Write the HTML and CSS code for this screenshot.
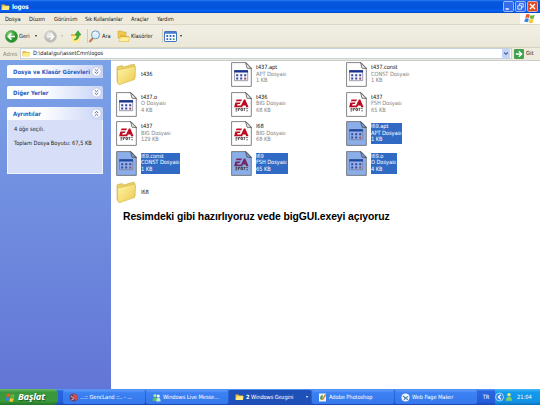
FILE: index.html
```html
<!DOCTYPE html>
<html lang="tr">
<head>
<meta charset="utf-8">
<title>logos</title>
<link rel="stylesheet" href="styles.css">
</head>
<body>
<svg class="defs" width="0" height="0">
  <defs>
    <linearGradient id="gold" x1="0" y1="0" x2="1" y2="1"><stop offset="0" stop-color="#fff6a8"/><stop offset="1" stop-color="#ecc94e"/></linearGradient>
    <radialGradient id="green" cx=".35" cy=".3"><stop offset="0" stop-color="#8fdc7c"/><stop offset="1" stop-color="#27942c"/></radialGradient>
    <radialGradient id="gray" cx=".35" cy=".3"><stop offset="0" stop-color="#eeeeea"/><stop offset="1" stop-color="#bdbdb8"/></radialGradient>
    <symbol id="folder" viewBox="0 0 21 23">
      <path d="M1 4.5Q1 3.5 2 3.5L6 2.6L8 4L17 1.2Q19 1 19 3V15L3 21L1 19Z" fill="#edcf63" stroke="#c8a941" stroke-width=".6"/>
      <path d="M1.5 7L17.5 3.6Q19.5 3.3 19.5 5L18.5 16.5L4 21.5Q1.8 22 1.7 19.5Z" fill="url(#gold)" stroke="#d2b54e" stroke-width=".6"/>
    </symbol>
    <symbol id="mini-folder" viewBox="0 0 9 7">
      <path d="M.5 1H3.5L4.3 2H8V6.3H.5Z" fill="#e4b63c"/><path d="M1.6 2.8H8.7L7.8 6.5H.6Z" fill="#ffea86"/>
    </symbol>
    <symbol id="page" viewBox="0 0 21 25">
      <path class="paper" d="M.6.6H15L20.3 6V24.4H.6Z" stroke="#666" stroke-width=".8"/>
      <path class="fold" d="M14.6.6L16 6.2L20.3 6.6Z" stroke="#444" stroke-width=".7"/>
    </symbol>
    <symbol id="grid" viewBox="0 0 21 25">
      <use href="#page"/>
      <path class="sheet" d="M3.5 8.5H16.7V18.7H3.5Z" stroke="#77798c" stroke-width=".7"/>
      <path class="bar" d="M3.2 8.2H17V10.5H3.2Z"/>
      <path d="M5.2 12.2h2v2h-2zM9.2 12.2h2v2h-2zM13.2 12.2h2v2h-2zM5.2 15.6h2v2h-2zM9.2 15.6h2v2h-2z" fill="#374895"/><path d="M13.2 15.6h2v2h-2z" fill="#914c63"/>
    </symbol>
    <symbol id="ea" viewBox="0 0 21 25">
      <use href="#page"/>
      <path class="ea-mark" d="M5.6 7.6H11L10.2 9.3H4.8ZM4.4 10.4H9.6L8.8 12H6.6L6.1 13.4H10L12.9 7.6H14.3L17.6 15.2H15.1L14.5 13.5H12L11.1 15.2H3.1Z"/>
      <path d="M4.5 16.4H6.5M4.5 17.7H6.5M4.5 19H6.2M7.5 16.4V19M7.5 16.5H9V17.7M10 16.4H11.5V18.6H10ZM12.5 16.4H14.5M13.3 16.5V19M15.2 16.6H16.8M15.3 18.8H16.9" fill="none" stroke="#342a2a" stroke-width=".75"/>
    </symbol>
    <symbol id="flag" viewBox="0 0 12 11">
      <path d="M2.2 1.6Q4 .3 5.8 1.6L5 5Q3.3 4 1.3 5Z" fill="#ed5a2b"/><path d="M6.5 1.9Q8.5 3 10.7 1.8L9.8 5.4Q7.8 6.4 5.7 5.3Z" fill="#6bb543"/>
      <path d="M1.1 5.7Q3 4.7 4.8 5.8L4 9.3Q2.2 8.2.2 9.1Z" fill="#3a82e0"/><path d="M5.5 6Q7.5 7.1 9.6 6.1L8.7 9.8Q6.7 10.7 4.7 9.5Z" fill="#f8c62e"/>
    </symbol>
    <symbol id="chev" viewBox="0 0 11 11">
      <circle cx="5.5" cy="5.5" r="4.6" fill="#fff" stroke="#b4bfdd" stroke-width=".7"/>
      <path d="M3.7 3.1L5.5 4.8L7.3 3.1M3.7 5.9L5.5 7.6L7.3 5.9" fill="none" stroke="#3b56a0" stroke-width=".9"/>
    </symbol>
  </defs>
</svg>

<div class="window">
  <header class="title">
    <svg class="title-icon" width="9" height="8"><use href="#mini-folder"/></svg>
    <span class="title-text">logos</span>
    <div class="controls">
      <svg width="11" height="11"><rect x=".5" y=".5" width="10" height="10" rx="1.3" fill="#356cec" stroke="#bdcff7" stroke-width=".8"/><path d="M2.5 8H5.8" stroke="#fff" stroke-width="1.4"/></svg>
      <svg width="11" height="11"><rect x=".5" y=".5" width="10" height="10" rx="1.3" fill="#356cec" stroke="#bdcff7" stroke-width=".8"/><path d="M4.5 4V2.7H8.2V6.2H7M2.8 4.7H6.5V8.2H2.8Z" fill="none" stroke="#fff" stroke-width=".8"/></svg>
      <svg width="11" height="11"><rect x=".5" y=".5" width="10" height="10" rx="1.3" fill="#df4c25" stroke="#f3c3b8" stroke-width=".8"/><path d="M3 3L8 8M8 3L3 8" stroke="#fff" stroke-width="1.3"/></svg>
    </div>
  </header>

  <div class="menubar">
    <nav class="menu"><span>Dosya</span><span>Düzen</span><span>Görünüm</span><span class="tight">Sık Kullanılanlar</span><span>Araçlar</span><span>Yardım</span></nav>
    <div class="brand"><svg width="12" height="11"><use href="#flag"/></svg></div>
  </div>

  <div class="toolbar">
    <div class="tool back">
      <svg width="13" height="13"><circle cx="6.5" cy="6.5" r="6" fill="url(#green)" stroke="#3c9139" stroke-width=".6"/><path d="M10 6.5H3.6M6.4 3.4L3.3 6.5L6.4 9.6" fill="none" stroke="#fff" stroke-width="1.6"/></svg>
      <span>Geri</span><i class="caret"></i>
    </div>
    <div class="tool forward">
      <svg width="13" height="13"><circle cx="6.5" cy="6.5" r="5.8" fill="url(#gray)" stroke="#b2b2ad" stroke-width=".6"/><path d="M3 6.5H9.4M6.6 3.4L9.7 6.5L6.6 9.6" fill="none" stroke="#fff" stroke-width="1.5"/></svg>
      <i class="caret dim"></i>
    </div>
    <svg class="up" width="12" height="13"><path d="M1 4H4L5 5H10V12H1Z" fill="#e5bd4d"/><path d="M1 6H11L9.5 12.5H1Z" fill="#ffeb91"/><path d="M4 10Q7.3 8.7 7 5H4.9L8 .7L11 5H9Q9.3 10 4 10Z" fill="#3cad37" stroke="#24842a" stroke-width=".5"/></svg>
    <div class="tool search">
      <svg width="13" height="13"><path d="M5 8L1.5 12" stroke="#c27e52" stroke-width="2"/><circle cx="7.5" cy="4.8" r="4" fill="#d9efff" stroke="#7898bd"/><path d="M5.4 4Q6 2.5 8 2.5" stroke="#fff" fill="none"/></svg>
      <span>Ara</span>
    </div>
    <div class="tool folders">
      <svg width="13" height="12"><path d="M1 1H5L6 2H9V8H1Z" fill="#f0c94f" stroke="#c89c33" stroke-width=".5"/><path d="M3 5H7L8 6H12V11.5H3Z" fill="#e3b13c"/><path d="M3.5 7H12.8L11.5 11.5H2Z" fill="#fff09b" stroke="#d9b64b" stroke-width=".5"/></svg>
      <span>Klasörler</span>
    </div>
    <div class="tool views">
      <svg width="13" height="11"><rect x=".5" y=".5" width="12" height="10" rx=".6" fill="#fff" stroke="#4674bc"/><path d="M1 1H12V2.8H1Z" fill="#497ed0"/><path d="M2.4 4.1h1.8v1.8H2.4zM5.6 4.1h1.8v1.8H5.6zM8.8 4.1h1.8v1.8H8.8zM2.4 7.3h1.8v1.8H2.4zM5.6 7.3h1.8v1.8H5.6z" fill="#376bb3"/><path d="M8.8 7.3h1.8v1.8H8.8z" fill="#43a047"/></svg>
      <i class="caret"></i>
    </div>
  </div>

  <div class="address">
    <span class="address-label">Adres</span>
    <div class="field">
      <svg width="9" height="7"><use href="#mini-folder"/></svg>
      <span>D:\data\gui\assetCmn\logos</span>
      <svg class="drop" width="8" height="9"><rect width="8" height="9" rx="1" fill="#c3d3fb"/><path d="M2.2 3.5L4 5.3L5.8 3.5" fill="none" stroke="#4d6185" stroke-width="1.1"/></svg>
    </div>
    <div class="go">
      <svg width="10" height="10"><rect x=".3" y=".3" width="9.4" height="9.4" rx="1" fill="#38a447" stroke="#278536" stroke-width=".6"/><path d="M1.8 5H7.5M4.8 2.2L7.7 5L4.8 7.8" fill="none" stroke="#fff" stroke-width="1.4"/></svg>
      <span>Git</span>
    </div>
  </div>

  <main class="content">
    <aside class="side">
      <section class="panel"><h2>Dosya ve Klasör Görevleri<svg width="11" height="11"><use href="#chev"/></svg></h2></section>
      <section class="panel"><h2>Diğer Yerler<svg width="11" height="11"><use href="#chev"/></svg></h2></section>
      <section class="panel"><h2>Ayrıntılar<svg class="flip" width="11" height="11"><use href="#chev"/></svg></h2>
        <div class="details"><p>4 öğe seçili.</p><p class="size">Toplam Dosya Boyutu: 67,5 KB</p></div>
      </section>
    </aside>
    <div class="view">
      <div class="files">
        <div class="file folder"><svg><use href="#folder"/></svg><p><b>t436</b></p></div>
        <div class="file"><svg><use href="#grid"/></svg><p><b>t437.apt</b><br>APT Dosyası<br>1 KB</p></div>
        <div class="file"><svg><use href="#grid"/></svg><p><b>t437.const</b><br>CONST Dosyası<br>1 KB</p></div>
        <div class="file"><svg><use href="#grid"/></svg><p><b>t437.o</b><br>O Dosyası<br>4 KB</p></div>
        <div class="file"><svg><use href="#ea"/></svg><p><b>t436</b><br>BIG Dosyası<br>68 KB</p></div>
        <div class="file"><svg><use href="#ea"/></svg><p><b>t437</b><br>FSH Dosyası<br>65 KB</p></div>
        <div class="file"><svg><use href="#ea"/></svg><p><b>t437</b><br>BIG Dosyası<br>129 KB</p></div>
        <div class="file"><svg><use href="#ea"/></svg><p><b>l68</b><br>BIG Dosyası<br>68 KB</p></div>
        <div class="file selected"><svg><use href="#grid"/></svg><p><b>l69.apt</b><br>APT Dosyası<br>1 KB</p></div>
        <div class="file selected"><svg><use href="#grid"/></svg><p><b>l69.const</b><br>CONST Dosyası<br>1 KB</p></div>
        <div class="file selected"><svg><use href="#ea"/></svg><p><b>l69</b><br>FSH Dosyası<br>65 KB</p></div>
        <div class="file selected"><svg><use href="#grid"/></svg><p><b>l69.o</b><br>O Dosyası<br>4 KB</p></div>
        <div class="file folder"><svg><use href="#folder"/></svg><p><b>l68</b></p></div>
      </div>
      <p class="caption">Resimdeki gibi hazırlıyoruz vede bigGUI.exeyi açıyoruz</p>
    </div>
  </main>
</div>

<footer class="taskbar">
  <div class="start"><svg width="11" height="11"><use href="#flag"/></svg><span>Başlat</span></div>
  <div class="tasks">
    <div class="task"><svg width="9" height="9"><circle cx="4.5" cy="4.5" r="4" fill="#6c456f"/><path d="M4.5.5A4 4 0 0 1 7 7.5L4.5 4.5Z" fill="#d84d48"/><path d="M2 3L5 5.5L2.5 7" stroke="#d9bbc8" fill="none"/></svg><span>...:: GencLand ::.. - ...</span></div>
    <div class="task"><svg width="9" height="9"><circle cx="3" cy="2.6" r="1.6" fill="#a7e5a0"/><path d="M.5 8Q.5 4.3 3 4.3Q5.5 4.3 5.5 8Z" fill="#55bd5b"/><circle cx="6.3" cy="3" r="1.5" fill="#fff"/><path d="M4.2 8.4Q4.2 4.8 6.4 4.8Q8.6 4.8 8.6 8.4Z" fill="#bfeed0"/></svg><span>Windows Live Messe...</span></div>
    <div class="task active"><svg width="9" height="8"><use href="#mini-folder"/></svg><span><strong>2</strong> Windows Gezgini</span><i class="caret light"></i></div>
    <div class="task"><svg width="9" height="9"><rect x="1" y=".5" width="7" height="8" fill="#f5f5e5"/><path d="M2 6Q2 2 5 2L4 7Z" fill="#4b9b60"/><path d="M7.8 1.5L4.2 6.8" stroke="#cc8428" stroke-width="1.4"/></svg><span>Adobe Photoshop</span></div>
    <div class="task"><svg width="9" height="9"><circle cx="4.5" cy="4.5" r="4" fill="#eef6ff"/><path d="M2 3L4.5 5L7 3.4M3 7L4.5 5L7 6.8" fill="none" stroke="#4a80a5" stroke-width="1.1"/></svg><span>Web Page Maker</span></div>
  </div>
  <div class="lang">TR</div>
  <div class="tray">
    <svg width="9" height="10"><circle cx="4.5" cy="5" r="4" fill="#3289ec" stroke="#c6e4ff" stroke-width=".8"/><path d="M5.8 2.7L3.4 5L5.8 7.3" fill="none" stroke="#fff" stroke-width="1.3"/></svg>
    <svg width="8" height="10"><circle cx="4" cy="2.8" r="1.8" fill="#d9ec79"/><path d="M1 8.7Q1 4.8 4 4.8Q7 4.8 7 8.7Z" fill="#7fd062"/></svg>
    <span>21:04</span>
  </div>
</footer>
</body>
</html>
```

FILE: styles.css
```css
* { box-sizing: border-box; }
body {
  margin: 0; width: 540px; height: 405px; overflow: hidden;
  display: flex; flex-direction: column;
  font: 5.7px/6.7px "DejaVu Sans Condensed", "DejaVu Sans", sans-serif;
  font-stretch: condensed; color: #222; white-space: nowrap; background: #fff;
}
p, h2 { margin: 0; }
svg { display: block; flex: none; }
.defs { position: absolute; }
.window { flex: 1; min-height: 0; display: flex; flex-direction: column; }

.title {
  height: 13px; flex: none; display: flex; align-items: center; padding: 0 2px 0 1px; color: #fff;
  background: linear-gradient(#2e7bf1 0, #0757df 14%, #0453dc 60%, #0763f7 85%, #0343bd);
}
.title-text { margin: 1px 0 0 2px; font: bold 6.4px/9px "DejaVu Sans Condensed", sans-serif; letter-spacing: -.2px; }
.controls { margin-left: auto; display: flex; gap: 1px; }

.menubar { height: 12px; flex: none; display: flex; justify-content: space-between; background: #eeebdc; border-bottom: 1px solid #dcd8c7; }
.menu { display: grid; grid-template-columns: 24px 25px 31px 46px 26px 30px; align-items: center; padding: 2px 0 0 5px; letter-spacing: -.08px; }
.tight { letter-spacing: -.2px; }
.brand { width: 20px; background: #fff; display: flex; align-items: center; justify-content: center; }

.toolbar { height: 23px; flex: none; display: flex; align-items: center; background: linear-gradient(#f1efe5, #ebe8d8); border-bottom: 1px solid #d7d3c1; }
.tool { display: flex; align-items: center; flex: none; }
.back { width: 39px; margin-left: 5px; }
.back span { margin-left: 1px; width: 16px; }
.forward { width: 26px; gap: 4px; }
.up { margin-right: 5px; }
.search { width: 30px; height: 14px; gap: 1px; border-left: 1px solid #cfccbd; }
.folders { width: 44px; height: 14px; gap: 1px; letter-spacing: -.1px; }
.views { height: 14px; margin-left: 1px; border-left: 1px solid #cfccbd; }
.views svg { margin: 0 3px 0 1px; }
.caret { width: 0; height: 0; border: 1.5px solid transparent; border-top: 2px solid #222; border-bottom: 0; }
.dim { border-top-color: #b6b3a8; }
.light { border-top-color: #fff; }

.address { height: 12px; flex: none; display: flex; align-items: stretch; background: #eeebdd; padding-bottom: 1px; }
.address-label { width: 20px; padding: 3px 0 0 3px; color: #8b8981; }
.field { flex: 1; display: flex; align-items: center; background: #fff; border: 1px solid #c5d1db; padding: 0 1px; gap: 2px; letter-spacing: -.03px; }
.drop { margin-left: auto; }
.go { width: 28px; display: flex; align-items: center; padding-left: 2px; gap: 2px; }

.content { flex: 1; min-height: 0; display: flex; }
.side { width: 111px; flex: none; padding: 5px 8px 0 7px; display: flex; flex-direction: column; gap: 8px; background: linear-gradient(#7ba2e7, #6375d6); }
.panel h2 {
  height: 13px; display: flex; align-items: center; justify-content: space-between; padding: 0 1px 0 6px;
  font: bold 5.9px/8px "DejaVu Sans Condensed", sans-serif; letter-spacing: -.01px; color: #2c5bc0;
  background: linear-gradient(90deg, #fff 35%, #c8d4f7); border-radius: 2px 2px 0 0;
}
.flip { transform: rotate(180deg); }
.details { height: 54px; padding: 6px 6px 0; background: #d6dff7; border: 1px solid #edf2fd; border-top: 0; color: #222; }
.size { margin-top: 7px; letter-spacing: -.03px; }

.view { flex: 1; border-top: 1px solid #ccc; }
.files { display: grid; grid-template-columns: repeat(3, 115px); grid-auto-rows: 29.5px; padding: 1px 0 0 5px; }
.file {
  --paper: #fff; --fold: #eee; --sheet: #f5f5ff; --bar: #1b338f; --mark: #bd0c22;
  display: flex; gap: 4px; color: #858585; letter-spacing: -.08px;
}
.selected { --paper: #8baee8; --fold: #7c9ed8; --sheet: #93b0ec; --bar: #214a9f; --mark: #752862; }
.file svg { width: 21px; height: 25px; }
.file p { height: 21px; margin-top: 2px; line-height: 6.7px; }
.file b { font-weight: normal; color: #111; }
.file.folder { align-items: center; height: 25px; }
.file.folder svg { height: 23px; }
.file.folder p { height: 7px; margin: 0; }
.paper { fill: var(--paper); }
.fold { fill: var(--fold); }
.sheet { fill: var(--sheet); }
.bar { fill: var(--bar); }
.ea-mark { fill: var(--mark); }
.selected p, .selected b { color: #fff; }
.selected p { background: #316ac5; padding-right: 1px; }
.caption { margin: 0 0 0 12px; font: bold 10.4px/14px "Liberation Sans", Arial, sans-serif; letter-spacing: -.09px; color: #000; }

.taskbar { height: 16px; flex: none; display: flex; color: #fff; background: linear-gradient(#5a9cf7, #2a65df 15%, #245ddb 80%, #1b47ad); }
.start {
  width: 58px; display: flex; align-items: center; gap: 2px; padding-left: 5px; border-radius: 0 5px 5px 0;
  background: linear-gradient(#6db96b, #3b963c 20%, #389b39 75%, #267329);
  font: italic bold 9.4px/12px "Open Sans", "Noto Sans", sans-serif; letter-spacing: -.2px; text-shadow: 1px 1px 1px #285928;
}
.tasks { display: grid; grid-template-columns: repeat(5, 82px); gap: 1px; margin-left: 5px; padding: 1px 0; }
.task { display: flex; align-items: center; gap: 2px; padding-left: 6px; border-radius: 2px; background: linear-gradient(#609bfa, #3c81f3 20%, #3478eb); letter-spacing: -.08px; }
.active { background: #1e50b8; }
.task .caret { margin: 0 3px 0 auto; }
.lang { width: 18px; display: flex; align-items: center; justify-content: center; }
.tray { flex: 1; display: flex; align-items: center; gap: 1px; background: linear-gradient(#4bbaf8, #129aec 20%, #1292e5 80%, #0d70b9); }
.tray span { margin-left: 3px; }
```
